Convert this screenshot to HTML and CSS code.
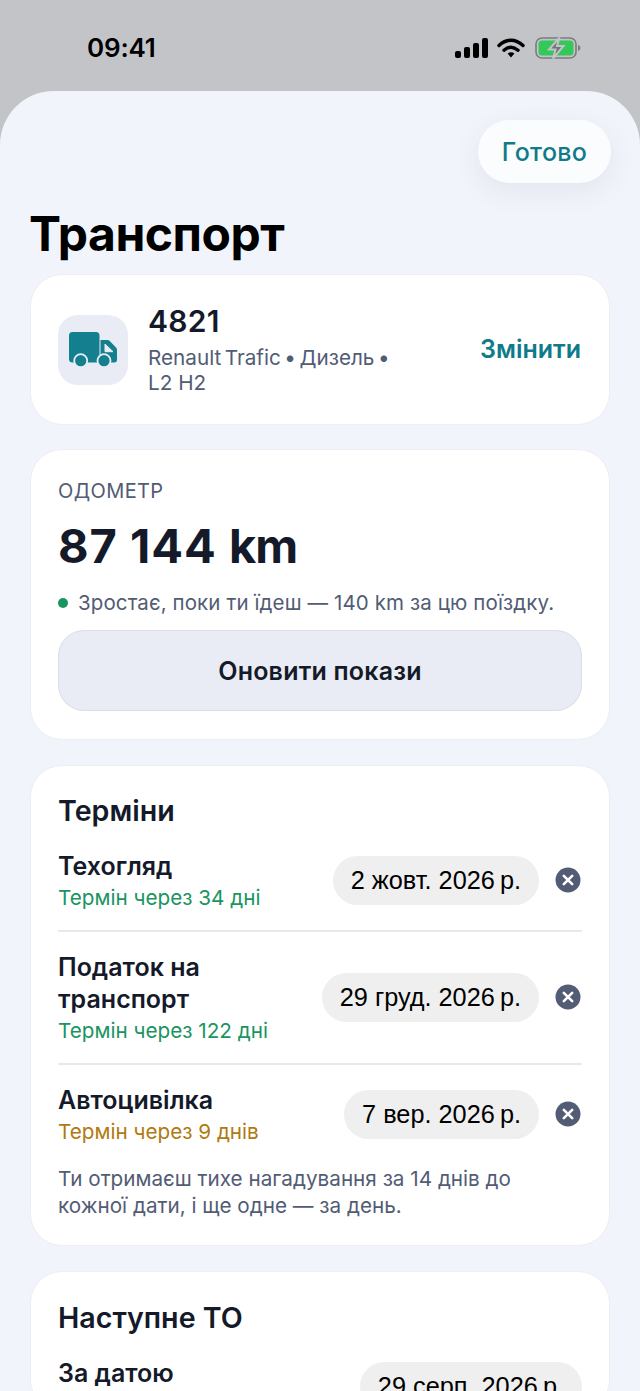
FILE: index.html
```html
<!DOCTYPE html>
<html lang="uk">
<head>
<meta charset="utf-8">
<title>Транспорт</title>
<link rel="stylesheet" href="styles.css">
</head>
<body>
<div class="screen">
  <header class="status">
    <span class="time">09:41</span>
    <div class="status-icons">
      <svg class="ic-signal" width="33" height="20" viewBox="0 0 33 20"><rect x="0" y="13" width="6" height="7" rx="2" fill="#000"/><rect x="9" y="9" width="6" height="11" rx="2" fill="#000"/><rect x="18" y="5" width="6" height="15" rx="2" fill="#000"/><rect x="27" y="0" width="6" height="20" rx="2" fill="#000"/></svg>
      <svg class="ic-wifi" width="28" height="20" viewBox="0 0 28 20"><path d="M2 7.5C9.5 0.5 18.5 0.5 26 7.5" fill="none" stroke="#000" stroke-width="3.4" stroke-linecap="round"/><path d="M7 12.2C11.5 8.3 16.5 8.3 21 12.2" fill="none" stroke="#000" stroke-width="3.4" stroke-linecap="round"/><path d="M10.6 15.6C12.6 13.9 15.4 13.9 17.4 15.6L14 19.4Z" fill="#000"/></svg>
      <svg class="ic-batt" width="46" height="22" viewBox="0 0 46 22"><rect x="1" y="1" width="40" height="20" rx="6" fill="none" stroke="#7a7c80" stroke-width="1.6"/><rect x="3.5" y="3.5" width="35" height="15" rx="3.5" fill="#34c759"/><path d="M43 8v6c1.5-.4 2.4-1.6 2.4-3s-.9-2.600-2.400-3Z" fill="#7a7c80"/><path d="M24.500 0.500 14 12.500h6.500L18 21.500 28.500 9h-6.500Z" fill="#727478" stroke="#c3c4c8" stroke-width="2"/></svg>
    </div>
  </header>
  <main class="sheet">
    <div class="top-row"><button class="done">Готово</button></div>
    <h1 class="title">Транспорт</h1>

    <section class="card vehicle">
      <div class="truck-box">
        <svg width="48" height="36" viewBox="0 0 48 36"><path d="M3.500 0h23.500a3.500 3.500 0 0 1 3.500 3.500V30.500H3.500A3.500 3.500 0 0 1 0 27V3.500A3.500 3.500 0 0 1 3.500 0Z" fill="#14808f"/><path d="M31.500 8h7c1 0 1.900.4 2.500 1.200l6 6.300c.6.700 1 1.400 1 2.300v10.200c0 1.400-1.100 2.500-2.500 2.500H31.500Z" fill="#14808f"/><path d="M36 12v7.700h8Z" fill="#e9ecf4" stroke="#e9ecf4" stroke-width="1" stroke-linejoin="round"/><circle cx="11.700" cy="28.700" r="6.500" fill="#14808f" stroke="#e9ecf4" stroke-width="1.800"/><circle cx="35" cy="28.700" r="6.500" fill="#14808f" stroke="#e9ecf4" stroke-width="1.800"/></svg>
      </div>
      <div class="veh-info">
        <div class="veh-num">4821</div>
        <div class="veh-desc"><span class="veh-line">Renault Trafic • Дизель •</span><br>L2 H2</div>
      </div>
      <a class="change">Змінити</a>
    </section>

    <section class="card odo">
      <div class="odo-label">ОДОМЕТР</div>
      <div class="odo-value">87 144 <span class="odo-unit">km</span></div>
      <div class="odo-note"><span class="dot"></span>Зростає, поки ти їдеш — 140 km за цю поїздку.</div>
      <button class="update">Оновити покази</button>
    </section>

    <section class="card terms">
      <h2 class="card-title">Терміни</h2>
      <div class="row">
        <div class="row-text"><div class="row-name">Техогляд</div><div class="row-sub green">Термін через 34 дні</div></div>
        <span class="pill">2 жовт. 2026&#8239;р.</span>
        <svg class="clear" width="26" height="26" viewBox="0 0 26 26"><circle cx="13" cy="13" r="12.500" fill="#525c74"/><path d="M8.800 8.800l8.400 8.400M17.200 8.800l-8.400 8.400" stroke="#fff" stroke-width="2.600" stroke-linecap="round"/></svg>
      </div>
      <div class="row">
        <div class="row-text"><div class="row-name">Податок на транспорт</div><div class="row-sub green">Термін через 122 дні</div></div>
        <span class="pill">29 груд. 2026&#8239;р.</span>
        <svg class="clear" width="26" height="26" viewBox="0 0 26 26"><circle cx="13" cy="13" r="12.500" fill="#525c74"/><path d="M8.800 8.800l8.400 8.400M17.200 8.800l-8.400 8.400" stroke="#fff" stroke-width="2.600" stroke-linecap="round"/></svg>
      </div>
      <div class="row last">
        <div class="row-text"><div class="row-name">Автоцивілка</div><div class="row-sub amber">Термін через 9 днів</div></div>
        <span class="pill">7 вер. 2026&#8239;р.</span>
        <svg class="clear" width="26" height="26" viewBox="0 0 26 26"><circle cx="13" cy="13" r="12.500" fill="#525c74"/><path d="M8.800 8.800l8.400 8.400M17.200 8.800l-8.400 8.400" stroke="#fff" stroke-width="2.600" stroke-linecap="round"/></svg>
      </div>
      <p class="hint">Ти отримаєш тихе нагадування за 14 днів до кожної дати, і ще одне — за день.</p>
    </section>

    <section class="card next">
      <h2 class="card-title">Наступне ТО</h2>
      <div class="row last top">
        <div class="row-text"><div class="row-name">За датою</div></div>
        <span class="pill">29 серп. 2026&#8239;р.</span>
      </div>
    </section>
  </main>
</div>
</body>
</html>
```
FILE: styles.css
```css
* { box-sizing: border-box; }
html, body { margin: 0; padding: 0; }
body { width: 640px; height: 1391px; overflow: hidden; background: #c3c4c8; font-family: Inter, "Liberation Sans", sans-serif; color: #141a29; }
.screen { height: 1391px; overflow: hidden; display: flex; flex-direction: column; }
.status { height: 91px; flex: none; padding: 33px 59px 0 87px; display: flex; justify-content: space-between; align-items: flex-start; }
.time { font-size: 26px; line-height: 30px; font-weight: 600; color: #000; letter-spacing: -0.2px; }
.status-icons { display: flex; align-items: center; gap: 10px; padding-top: 4px; }
.ic-signal { margin-right: -1px; }
.sheet { flex: 1; background: #f2f4fb; border-radius: 54px 54px 0 0; padding: 29px 30px 0; }
.top-row { display: flex; justify-content: flex-end; margin-right: -1px; }
.done { width: 133px; height: 63px; border: 0; border-radius: 32px; background: #fbfcfe; box-shadow: 0 8px 28px rgba(60,70,100,.08); color: #0f7a8a; font: 500 25px/30px Inter, sans-serif; letter-spacing: .3px; padding: 0; }
.title { margin: 23px 0 12px -1px; font-size: 48px; line-height: 56px; font-weight: 700; color: #000; letter-spacing: -0.5px; }
.card { background: #fff; border: 1px solid #eceef3; border-radius: 32px; margin-bottom: 24px; }
.vehicle { height: 151px; padding: 0 28px 0 27px; display: flex; align-items: center; }
.truck-box { width: 70px; height: 70px; border-radius: 20px; background: #e9ecf4; display: flex; align-items: center; justify-content: center; flex: none; margin-right: 20px; }
.veh-info { flex: 1; padding-bottom: 2px; }
.veh-num { font-size: 30px; line-height: 36px; font-weight: 600; margin-bottom: 6px; letter-spacing: .3px; }
.veh-desc { font-size: 20.700px; line-height: 25px; color: #525c74; }
.veh-line { word-spacing: -2.300px; }
.change { font-size: 25px; font-weight: 600; color: #0f7a8a; margin-top: -1px; }
.odo { height: 291px; padding: 28px 27px 0; margin-bottom: 25px; }
.odo-label { font-size: 20px; line-height: 26px; color: #525c74; letter-spacing: .4px; }
.odo-value { font-size: 47px; line-height: 56px; font-weight: 700; margin-top: 14px; letter-spacing: 1px; }
.odo-unit { letter-spacing: -1px; }
.odo-note { display: flex; align-items: center; font-size: 20.500px; line-height: 26px; color: #525c74; margin-top: 16px; white-space: nowrap; letter-spacing: .11px; }
.dot { width: 10px; height: 10px; border-radius: 50%; background: #1a9460; margin-right: 10px; flex: none; }
.update { display: block; width: 100%; height: 81px; margin-top: 14px; border: 1px solid #d9dde8; border-radius: 26px; background: #e9ecf4; font: 600 25px/30px Inter, sans-serif; color: #141a29; letter-spacing: .2px; }
.terms { height: 481px; padding: 27px 27px 0; margin-bottom: 25px; }
.next { padding: 28px 27px 0; }
.card-title { margin: 0 0 21px; font-size: 28.600px; line-height: 36px; font-weight: 600; }
.row { display: flex; align-items: center; padding: 0 0 17px; margin-bottom: 19px; border-bottom: 2px solid #e8e9ed; }
.row.last { border-bottom: 0; padding-bottom: 0; margin-bottom: 0; }
.row.top { align-items: flex-start; }
.row.top .pill { margin: 5px 0 0; }
.row-text { flex: 1; min-width: 0; }
.row-name { font-size: 25px; line-height: 32px; font-weight: 600; }
.row-sub { font-size: 20.700px; line-height: 31px; }
.green { color: #1a9460; }
.amber { color: #b07a10; }
.pill { flex: none; height: 49px; margin-bottom: 3px; padding: 0 18px; border-radius: 25px; background: #efefef; color: #000; font-family: "Liberation Sans", sans-serif; font-size: 25.300px; line-height: 49px; white-space: nowrap; }
.clear { flex: none; margin: 0 1px 3px 16px; }
.hint { margin: 18px 0 0; font-size: 20.700px; line-height: 27px; color: #525c74; }
```
